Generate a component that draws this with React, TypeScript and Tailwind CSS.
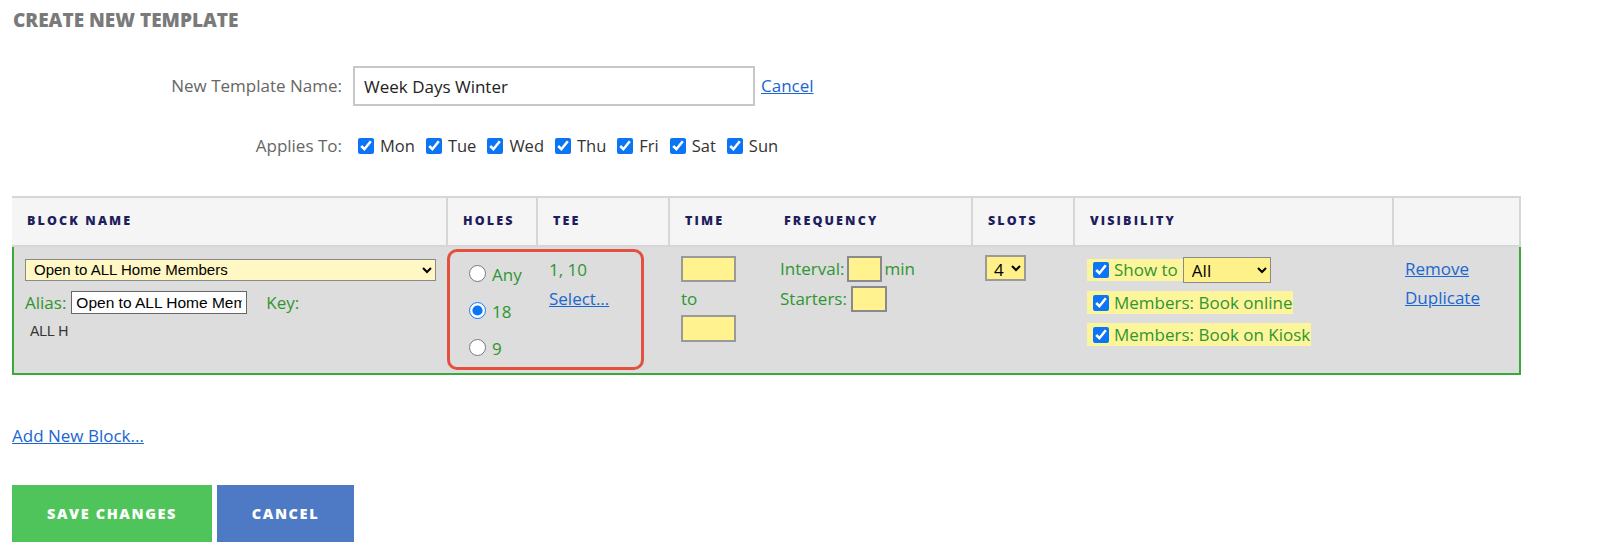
import React from "react";

const days = ["Mon", "Tue", "Wed", "Thu", "Fri", "Sat", "Sun"];

const th =
    "h-[51px] bg-[#f5f5f5] border-t-2 border-b-2 border-[#d6d6d6] text-left align-middle text-[12.5px] font-extrabold tracking-[0.17em] text-[#1f1d5e] uppercase";

export default function App() {
    return (
        <div className="w-full min-h-[559px] bg-white px-[12px] pt-[7px] font-['Open_Sans',sans-serif] text-[17px] text-[#333]">
            <h1 className="pl-[1px] text-[19px] leading-[26px] font-extrabold text-[#7a7a7a] uppercase">
                Create New Template
            </h1>

            <div className="mt-[33px] flex items-center gap-[11px]">
                <label className="w-[330px] text-right text-[#666]">New Template Name:</label>
                <input
                    defaultValue="Week Days Winter"
                    className="w-[402px] h-[40px] border-2 border-[#c8c8c8] px-[9px] text-[17px] text-[#222] outline-none"
                />
                <a href="#" className="-ml-[5px] text-[#1a66d2] underline">
                    Cancel
                </a>
            </div>

            <div className="mt-[28px] flex items-center gap-[11px] h-[24px]">
                <label className="w-[330px] text-right text-[#666]">Applies To:</label>
                <div className="flex items-center pl-[5px] text-[16.5px]">
                    {days.map((d) => (
                        <label key={d} className="flex items-center mr-[11px]">
                            <input
                                type="checkbox"
                                defaultChecked
                                className="w-[16px] h-[16px] m-0 mr-[6px] accent-[#0b75f5]"
                            />
                            <span className="text-[#333]">{d}</span>
                        </label>
                    ))}
                </div>
            </div>

            <div className="relative mt-[38px] w-[1509px]">
                <table className="w-[1509px] table-fixed border-separate border-spacing-0">
                    <colgroup>
                        <col className="w-[436px]" />
                        <col className="w-[90px]" />
                        <col className="w-[132px]" />
                        <col className="w-[99px]" />
                        <col className="w-[204px]" />
                        <col className="w-[102px]" />
                        <col className="w-[319px]" />
                        <col className="w-[127px]" />
                    </colgroup>
                    <thead>
                        <tr>
                            <th className={`${th} pl-[15px] border-r-2`}>Block Name</th>
                            <th className={`${th} pl-[15px] border-r-2`}>Holes</th>
                            <th className={`${th} pl-[15px] border-r-2`}>Tee</th>
                            <th className={`${th} pl-[15px]`}>Time</th>
                            <th className={`${th} pl-[15px] border-r-2`}>Frequency</th>
                            <th className={`${th} pl-[15px] border-r-2`}>Slots</th>
                            <th className={`${th} pl-[15px] border-r-2`}>Visibility</th>
                            <th className={`${th} border-r-2`} />
                        </tr>
                    </thead>
                    <tbody className="text-[#2f962f]">
                        <tr className="align-top">
                            <td className="h-[127px] bg-[#dcdddc] border-l-2 border-b-2 border-[#3aa83a] pl-[11px] pr-[12px] pt-[9px]">
                                <select className="w-[411px] h-[22px] bg-[#fff7c4] border border-[#8a8a8a] font-['Liberation_Sans',sans-serif] text-[15px] leading-none text-black pl-[4px]">
                                    <option>Open to ALL Home Members</option>
                                </select>
                                <div className="mt-[9px] flex items-center h-[24px]">
                                    <span>Alias:</span>
                                    <input
                                        defaultValue="Open to ALL Home Members"
                                        className="ml-[5px] w-[176px] h-[23px] bg-white border border-[#666] px-[4px] font-['Liberation_Sans',sans-serif] text-[15.5px] text-black outline-none"
                                    />
                                    <span className="ml-[19px]">Key:</span>
                                </div>
                                <div className="mt-[6px] pl-[5px] font-['Liberation_Sans',sans-serif] text-[14px] text-[#333]">
                                    ALL H
                                </div>
                            </td>
                            <td className="bg-[#dcdddc] border-b-2 border-[#3aa83a] pl-[21px] pt-[15px]">
                                {["Any", "18", "9"].map((h) => (
                                    <label key={h} className="flex items-center h-[22px] mb-[15px]">
                                        <input
                                            type="radio"
                                            name="holes"
                                            defaultChecked={h === "18"}
                                            className="w-[17px] h-[17px] m-0 mr-[6px] accent-[#0b75f5]"
                                        />
                                        <span className="mt-[4px]">{h}</span>
                                    </label>
                                ))}
                            </td>
                            <td className="bg-[#dcdddc] border-b-2 border-[#3aa83a] pl-[11px] pt-[12px]">
                                <div className="leading-[22px]">1, 10</div>
                                <a href="#" className="block mt-[7px] leading-[22px] text-[#1a66d2] underline">
                                    Select...
                                </a>
                            </td>
                            <td className="bg-[#dcdddc] border-b-2 border-[#3aa83a] pl-[11px] pt-[9px]">
                                <input className="block w-[55px] h-[26px] bg-[#fff28f] border-2 border-[#9a9a9a] outline-none" />
                                <div className="mt-[5px] leading-[24px]">to</div>
                                <input className="block mt-[4px] w-[55px] h-[27px] bg-[#fff28f] border-2 border-[#9a9a9a] outline-none" />
                            </td>
                            <td className="bg-[#dcdddc] border-b-2 border-[#3aa83a] pl-[11px] pt-[9px]">
                                <div className="flex items-center h-[26px]">
                                    <span>Interval:</span>
                                    <input className="ml-[3px] w-[35px] h-[26px] bg-[#fff28f] border-2 border-[#8a8a8a] outline-none" />
                                    <span className="ml-[2px]">min</span>
                                </div>
                                <div className="mt-[4px] flex items-center h-[26px]">
                                    <span>Starters:</span>
                                    <input className="ml-[4px] w-[36px] h-[26px] bg-[#fff28f] border-2 border-[#8a8a8a] outline-none" />
                                </div>
                            </td>
                            <td className="bg-[#dcdddc] border-b-2 border-[#3aa83a] pl-[12px] pt-[8px]">
                                <select className="w-[41px] h-[26px] bg-[#fff08a] border-2 border-[#9a9a9a] text-[17px] text-black pl-[3px]">
                                    <option>4</option>
                                </select>
                            </td>
                            <td className="bg-[#dcdddc] border-b-2 border-[#3aa83a] pl-[12px] pt-[12px]">
                                <div className="flex">
                                    <div className="flex items-center h-[22px] bg-[#fdf59b] pl-[6px]">
                                        <input
                                            type="checkbox"
                                            defaultChecked
                                            className="w-[16px] h-[16px] m-0 mr-[5px] accent-[#0b75f5]"
                                        />
                                        <span>Show to</span>
                                        <select className="ml-[5px] w-[88px] h-[26px] bg-[#fff18a] border border-[#8a8a8a] text-[17px] text-black pl-[4px]">
                                            <option>All</option>
                                        </select>
                                    </div>
                                </div>
                                <div className="flex mt-[10px]">
                                    <div className="flex items-center h-[23px] bg-[#fdf59b] pl-[6px] pr-[1px]">
                                        <input
                                            type="checkbox"
                                            defaultChecked
                                            className="w-[16px] h-[16px] m-0 mr-[5px] accent-[#0b75f5]"
                                        />
                                        <span>Members: Book online</span>
                                    </div>
                                </div>
                                <div className="flex mt-[9px]">
                                    <div className="flex items-center h-[23px] bg-[#fdf59b] pl-[6px] pr-[1px]">
                                        <input
                                            type="checkbox"
                                            defaultChecked
                                            className="w-[16px] h-[16px] m-0 mr-[5px] accent-[#0b75f5]"
                                        />
                                        <span>Members: Book on Kiosk</span>
                                    </div>
                                </div>
                            </td>
                            <td className="bg-[#dcdddc] border-r-2 border-b-2 border-[#3aa83a] pl-[11px] pt-[11px]">
                                <a href="#" className="block leading-[22px] text-[#1a66d2] underline">
                                    Remove
                                </a>
                                <a href="#" className="block mt-[7px] leading-[22px] text-[#1a66d2] underline">
                                    Duplicate
                                </a>
                            </td>
                        </tr>
                    </tbody>
                </table>
                <div className="absolute left-[435px] top-[53px] w-[197px] h-[121px] border-[3px] border-[#e2513f] rounded-[10px] pointer-events-none" />
            </div>

            <a href="#" className="mt-[50px] block w-fit leading-[22px] text-[#1a66d2] underline">
                Add New Block...
            </a>

            <div className="mt-[38px] flex gap-[5px]">
                <button
                    type="button"
                    className="w-[200px] h-[57px] bg-[#4fc45a] text-white text-[14.5px] font-extrabold tracking-[0.11em] uppercase"
                >
                    Save Changes
                </button>
                <button
                    type="button"
                    className="w-[137px] h-[57px] bg-[#4e79c4] text-white text-[14.5px] font-extrabold tracking-[0.11em] uppercase"
                >
                    Cancel
                </button>
            </div>
        </div>
    );
}
